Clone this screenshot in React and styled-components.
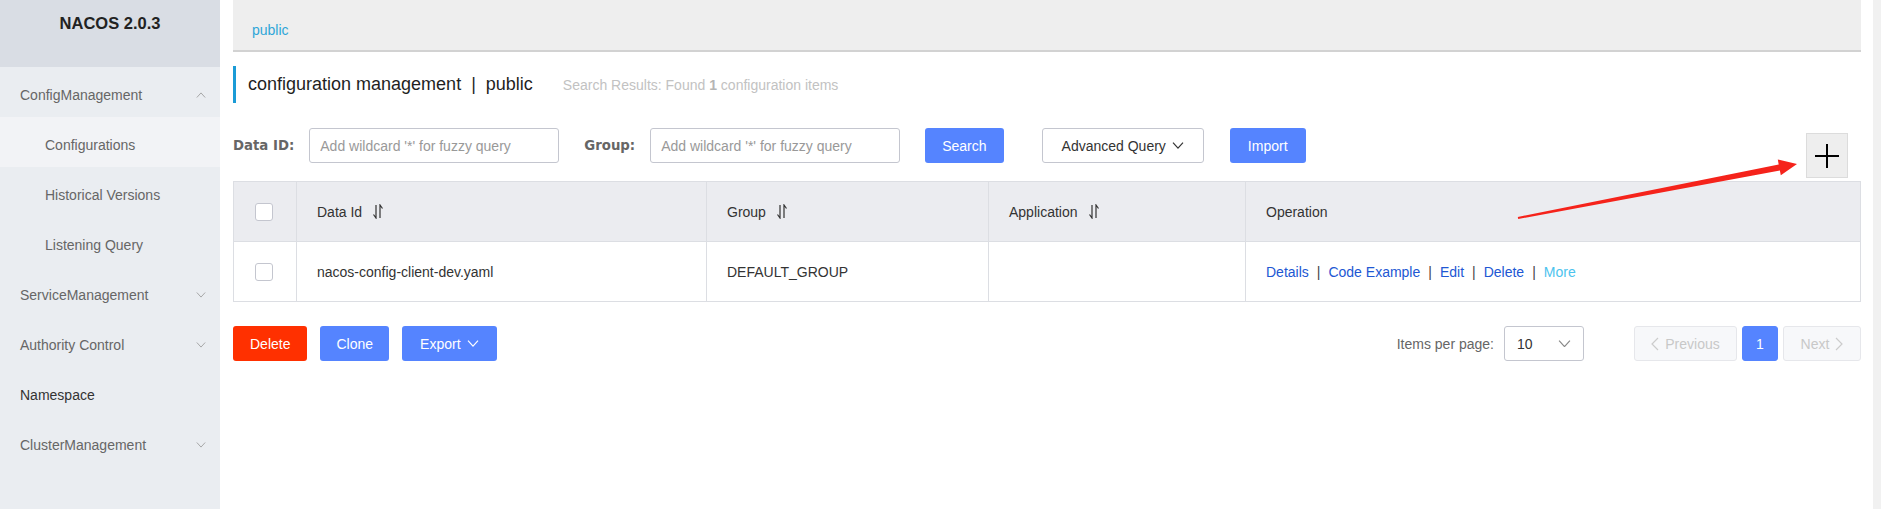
import styled, { createGlobalStyle } from "styled-components";

const GlobalStyle = createGlobalStyle`
  html, body {
    margin: 0;
    padding: 0;
    background: #fff;
    font-family: "Liberation Sans", Arial, sans-serif;
    font-size: 14px;
    color: #333;
  }
  * { box-sizing: border-box; }
`;

const Page = styled.div`
  display: flex;
  height: 100vh;
  overflow: hidden;
`;

const Sidebar = styled.aside`
  width: 220px;
  flex-shrink: 0;
  background: #eaedf1;
  display: flex;
  flex-direction: column;
`;

const Brand = styled.div`
  height: 67px;
  background: #d9dde4;
  display: flex;
  justify-content: center;
  padding-top: 14px;
  font-size: 16.5px;
  font-weight: 700;
  color: #222;
`;

const MenuItem = styled.div`
  height: 50px;
  display: flex;
  align-items: center;
  justify-content: space-between;
  padding: 6px 14px 0 ${(p) => (p.$sub ? 45 : 20)}px;
  background: ${(p) => (p.$active ? "#f2f3f6" : "transparent")};
  color: ${(p) => (p.$dark ? "#333" : "#666")};
  font-size: 14px;
`;

const Main = styled.main`
  position: relative;
  width: 1628px;
  margin-left: 13px;
  flex-shrink: 0;
  display: flex;
  flex-direction: column;
`;

const Gutter = styled.div`
  width: 8px;
  margin-left: 12px;
  background: #f1f1f1;
`;

const Breadcrumb = styled.div`
  height: 52px;
  background: #eeeeee;
  border-bottom: 2px solid #d2d2d2;
  display: flex;
  align-items: center;
  padding: 10px 0 0 19px;
  color: #2fa6d8;
  font-size: 14px;
`;

const TitleBar = styled.div`
  margin-top: 14px;
  height: 37px;
  border-left: 3px solid #1b9bd6;
  padding-left: 12px;
  display: flex;
  align-items: center;
`;

const Title = styled.h1`
  margin: 0;
  font-size: 18px;
  font-weight: 400;
  color: #1f1f1f;
  white-space: pre;
`;

const Summary = styled.span`
  margin-left: 30px;
  font-size: 14px;
  color: #c2c2c2;

  b { font-weight: 700; color: #b5b5b5; }
`;

const SearchRow = styled.div`
  margin-top: 25px;
  height: 50px;
  display: flex;
  align-items: flex-start;
`;

const Label = styled.label`
  line-height: 35px;
  font-family: "DejaVu Sans", Verdana, sans-serif;
  font-size: 13.3px;
  font-weight: 700;
  color: #666;
  margin: 0 15px 0 ${(p) => p.$gap || 0}px;
`;

const Input = styled.input`
  width: 250px;
  height: 35px;
  border: 1px solid #c4c6cf;
  border-radius: 3px;
  padding: 0 10px;
  font: inherit;
  font-size: 14px;
  color: #333;
  outline: none;

  &::placeholder { color: #999; }
`;

const Button = styled.button`
  height: 35px;
  padding: 0 ${(p) => p.$pad || 16}px;
  margin-left: ${(p) => p.$gap || 0}px;
  border-radius: 3px;
  font: inherit;
  font-size: 14px;
  display: inline-flex;
  align-items: center;
  gap: 6px;
  cursor: pointer;
  border: 1px solid
    ${(p) => (p.$kind === "normal" ? "#c4c6cf" : "transparent")};
  background: ${(p) =>
    p.$kind === "danger" ? "#ff3000" : p.$kind === "normal" ? "#fff" : "#5584ff"};
  color: ${(p) => (p.$kind === "normal" ? "#333" : "#fff")};
`;

const AddButton = styled.button`
  margin: 5px 13px 0 auto;
  width: 42px;
  height: 45px;
  background: #eeeeee;
  border: 1px solid #dcdcdc;
  display: flex;
  align-items: center;
  justify-content: center;
  padding: 0;
`;

const Table = styled.table`
  margin-top: 3px;
  width: 100%;
  border-collapse: collapse;
  border: 1px solid #dcdee3;
  table-layout: fixed;
`;

const Th = styled.th`
  height: 60px;
  background: #ebecf0;
  border: 1px solid #dcdee3;
  text-align: left;
  font-weight: 400;
  color: #333;
  padding: 0 20px;
`;

const Td = styled.td`
  height: 60px;
  border: 1px solid #dcdee3;
  padding: 0 20px;
  color: #333;
`;

const HeadCell = styled.span`
  display: inline-flex;
  align-items: center;
  gap: 10px;
`;

const Checkbox = styled.span`
  display: block;
  width: 18px;
  height: 18px;
  margin-left: 1px;
  border: 1px solid #c4c6cf;
  border-radius: 3px;
  background: #fff;
`;

const Ops = styled.div`
  display: flex;
  align-items: center;
`;

const OpLink = styled.a`
  color: ${(p) => (p.$light ? "#4cc3ee" : "#2157d3")};
  text-decoration: none;
`;

const Sep = styled.span`
  margin: 0 8px;
  color: #444;
`;

const Footer = styled.div`
  margin-top: 24px;
  display: flex;
  justify-content: space-between;
  align-items: center;
`;

const Group = styled.div`
  display: flex;
  align-items: center;
`;

const PagerText = styled.span`
  color: #666;
  margin-right: 10px;
`;

const Select = styled.div`
  width: 80px;
  height: 35px;
  border: 1px solid #c4c6cf;
  border-radius: 3px;
  display: flex;
  align-items: center;
  justify-content: space-between;
  padding: 0 12px;
  color: #333;
  margin-right: 50px;
`;

const PageButton = styled.button`
  height: 35px;
  width: ${(p) => p.$w}px;
  margin-left: ${(p) => p.$gap || 0}px;
  border-radius: 3px;
  font: inherit;
  font-size: 14px;
  display: inline-flex;
  align-items: center;
  justify-content: center;
  gap: 6px;
  padding: 0;
  border: 1px solid ${(p) => (p.$current ? "#5584ff" : "#e6e7eb")};
  background: ${(p) => (p.$current ? "#5584ff" : "#f7f8fa")};
  color: ${(p) => (p.$current ? "#fff" : "#c8c8c8")};
`;

const Annotation = styled.svg`
  position: absolute;
  left: 1280px;
  top: 150px;
  pointer-events: none;
`;

function Chevron({ up, size = 12, color = "currentColor", width = 1.2 }) {
  return (
    <svg width={size} height={size * 0.6} viewBox="0 0 12 7" fill="none">
      <path
        d={up ? "M1 6.5 L6 1 L11 6.5" : "M1 0.5 L6 6 L11 0.5"}
        stroke={color}
        strokeWidth={width}
      />
    </svg>
  );
}

function SideArrow({ left }) {
  return (
    <svg width="8" height="14" viewBox="0 0 8 14" fill="none">
      <path d={left ? "M7 1 L1 7 L7 13" : "M1 1 L7 7 L1 13"} stroke="#ccc" strokeWidth="1.2" />
    </svg>
  );
}

function SortIcon() {
  return (
    <svg width="12" height="15" viewBox="0 0 12 15" fill="none" stroke="#333" strokeWidth="1.2">
      <path d="M4 1 V14 L1.5 10.5" />
      <path d="M8 14 V1 L10.5 4.5" />
    </svg>
  );
}

function PlusIcon() {
  return (
    <svg width="26" height="26" viewBox="0 0 26 26">
      <path d="M13 1 V25 M1 13 H25" stroke="#000" strokeWidth="2" />
    </svg>
  );
}

const menu = [
  { label: "ConfigManagement", arrow: "up" },
  { label: "Configurations", sub: true, active: true },
  { label: "Historical Versions", sub: true },
  { label: "Listening Query", sub: true },
  { label: "ServiceManagement", arrow: "down" },
  { label: "Authority Control", arrow: "down" },
  { label: "Namespace", dark: true },
  { label: "ClusterManagement", arrow: "down" },
];

const ops = ["Details", "Code Example", "Edit", "Delete"];

export default function App() {
  return (
    <>
      <GlobalStyle />
      <Page>
        <Sidebar>
          <Brand>NACOS 2.0.3</Brand>
          {menu.map((m) => (
            <MenuItem key={m.label} $sub={m.sub} $active={m.active} $dark={m.dark}>
              <span>{m.label}</span>
              {m.arrow && <Chevron up={m.arrow === "up"} size={10} color="#999" width={1} />}
            </MenuItem>
          ))}
        </Sidebar>

        <Main>
          <Breadcrumb>public</Breadcrumb>

          <TitleBar>
            <Title>{"configuration management  |  public"}</Title>
            <Summary>
              Search Results: Found <b>1</b> configuration items
            </Summary>
          </TitleBar>

          <SearchRow>
            <Label>Data ID:</Label>
            <Input placeholder="Add wildcard '*' for fuzzy query" />
            <Label $gap={25}>Group:</Label>
            <Input placeholder="Add wildcard '*' for fuzzy query" />
            <Button $gap={25} $pad={16}>Search</Button>
            <Button $gap={38} $kind="normal" $pad={19}>
              Advanced Query <Chevron />
            </Button>
            <Button $gap={26} $pad={17}>Import</Button>
            <AddButton aria-label="add">
              <PlusIcon />
            </AddButton>
          </SearchRow>

          <Table>
            <colgroup>
              <col style={{ width: 63 }} />
              <col style={{ width: 410 }} />
              <col style={{ width: 282 }} />
              <col style={{ width: 257 }} />
              <col />
            </colgroup>
            <thead>
              <tr>
                <Th><Checkbox /></Th>
                <Th><HeadCell>Data Id <SortIcon /></HeadCell></Th>
                <Th><HeadCell>Group <SortIcon /></HeadCell></Th>
                <Th><HeadCell>Application <SortIcon /></HeadCell></Th>
                <Th>Operation</Th>
              </tr>
            </thead>
            <tbody>
              <tr>
                <Td><Checkbox /></Td>
                <Td>nacos-config-client-dev.yaml</Td>
                <Td>DEFAULT_GROUP</Td>
                <Td />
                <Td>
                  <Ops>
                    {ops.map((o) => (
                      <span key={o}>
                        <OpLink href="#">{o}</OpLink>
                        <Sep>|</Sep>
                      </span>
                    ))}
                    <OpLink href="#" $light>More</OpLink>
                  </Ops>
                </Td>
              </tr>
            </tbody>
          </Table>

          <Footer>
            <Group>
              <Button $kind="danger" $pad={16}>Delete</Button>
              <Button $gap={13} $pad={15}>Clone</Button>
              <Button $gap={13} $pad={17}>
                Export <Chevron />
              </Button>
            </Group>
            <Group>
              <PagerText>Items per page:</PagerText>
              <Select>
                <span>10</span>
                <Chevron size={13} color="#888" width={1.1} />
              </Select>
              <PageButton $w={103}>
                <SideArrow left /> Previous
              </PageButton>
              <PageButton $w={36} $gap={5} $current>1</PageButton>
              <PageButton $w={78} $gap={5}>
                Next <SideArrow />
              </PageButton>
            </Group>
          </Footer>

          <Annotation width="290" height="75" viewBox="0 0 290 75">
            <polygon
              points="4.8,67 265.7,14.4 264.8,9.5 284,14 267.8,25.3 266.9,20.4 5.2,69"
              fill="#f5231b"
            />
          </Annotation>
        </Main>
        <Gutter />
      </Page>
    </>
  );
}
